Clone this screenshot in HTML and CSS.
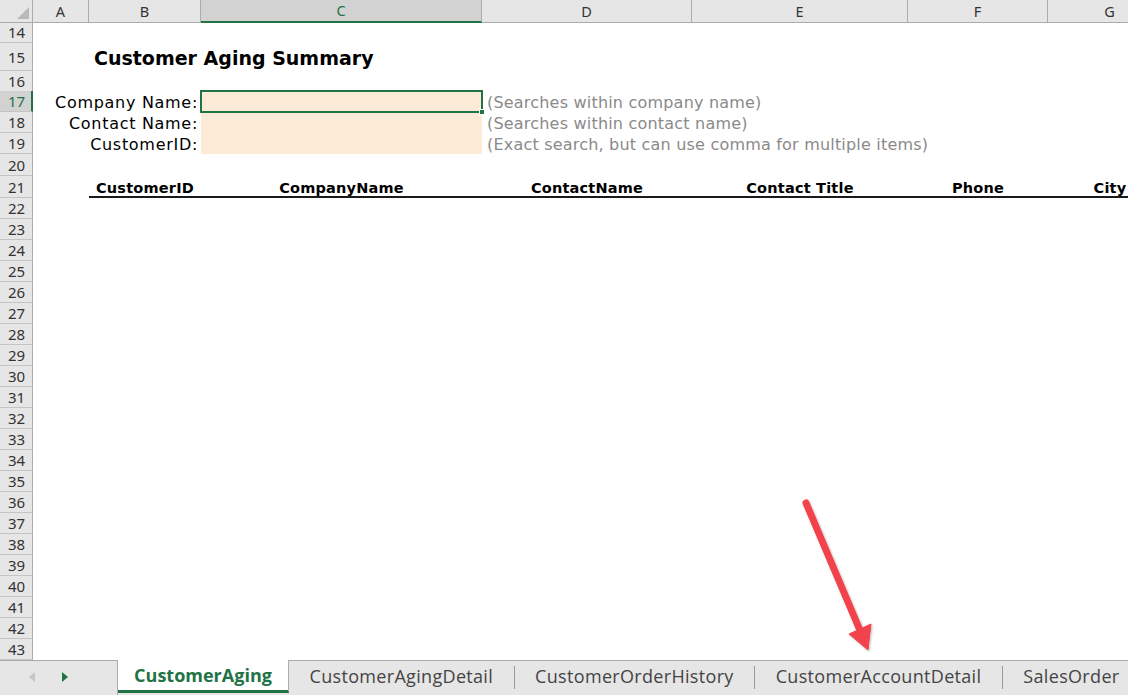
FILE: index.html
```html
<!DOCTYPE html>
<html>
<head>
<meta charset="utf-8">
<link rel="stylesheet" href="styles.css">
</head>
<body>
<div class="app">
  <div class="sheet">
    <div class="row colhead">
      <div class="corner"><span class="tri"></span></div>
      <div class="ch">A</div>
      <div class="ch">B</div>
      <div class="ch sel">C</div>
      <div class="ch">D</div>
      <div class="ch">E</div>
      <div class="ch">F</div>
      <div class="ch">G</div>
    </div>
    <div class="row h21"><div class="rh">14</div></div>
    <div class="row h28"><div class="rh">15</div><div class="title">Customer Aging Summary</div></div>
    <div class="row h20"><div class="rh">16</div></div>
    <div class="row h21 top"><div class="rh sel">17</div><div class="label">Company Name:</div><div class="input active"><span class="handle"></span></div><div class="hint">(Searches within company name)</div></div>
    <div class="row h21"><div class="rh">18</div><div class="label">Contact Name:</div><div class="input"></div><div class="hint">(Searches within contact name)</div></div>
    <div class="row h21"><div class="rh">19</div><div class="label">CustomerID:</div><div class="input"></div><div class="hint">(Exact search, but can use comma for multiple items)</div></div>
    <div class="row h22"><div class="rh">20</div></div>
    <div class="row h22 thead"><div class="rh">21</div><div class="th cb">CustomerID</div><div class="th">CompanyName</div><div class="th">ContactName</div><div class="th">Contact Title</div><div class="th">Phone</div><div class="th">City</div></div>
    <div class="row h21"><div class="rh">22</div></div>
    <div class="row h21"><div class="rh">23</div></div>
    <div class="row h21"><div class="rh">24</div></div>
    <div class="row h21"><div class="rh">25</div></div>
    <div class="row h21"><div class="rh">26</div></div>
    <div class="row h21"><div class="rh">27</div></div>
    <div class="row h21"><div class="rh">28</div></div>
    <div class="row h21"><div class="rh">29</div></div>
    <div class="row h21"><div class="rh">30</div></div>
    <div class="row h21"><div class="rh">31</div></div>
    <div class="row h21"><div class="rh">32</div></div>
    <div class="row h21"><div class="rh">33</div></div>
    <div class="row h21"><div class="rh">34</div></div>
    <div class="row h21"><div class="rh">35</div></div>
    <div class="row h21"><div class="rh">36</div></div>
    <div class="row h21"><div class="rh">37</div></div>
    <div class="row h21"><div class="rh">38</div></div>
    <div class="row h21"><div class="rh">39</div></div>
    <div class="row h21"><div class="rh">40</div></div>
    <div class="row h21"><div class="rh">41</div></div>
    <div class="row h21"><div class="rh">42</div></div>
    <div class="row h21"><div class="rh">43</div></div>
  </div>
  <div class="tabs">
    <div class="nav">
      <span class="tri-left"></span>
      <span class="tri-right"></span>
    </div>
    <div class="tab active">CustomerAging</div>
    <div class="tab">CustomerAgingDetail</div>
    <span class="sep"></span>
    <div class="tab">CustomerOrderHistory</div>
    <span class="sep"></span>
    <div class="tab">CustomerAccountDetail</div>
    <span class="sep"></span>
    <div class="tab">SalesOrder</div>
  </div>
  <svg class="arrow" width="1128" height="695" viewBox="0 0 1128 695">
    <defs>
      <filter id="sh" x="-20%" y="-20%" width="140%" height="140%">
        <feDropShadow dx="1" dy="1" stdDeviation="1.2" flood-color="#000" flood-opacity="0.25"/>
      </filter>
    </defs>
    <g filter="url(#sh)" fill="#f2434b" stroke="#f2434b">
      <line x1="806" y1="503" x2="859" y2="628" stroke-width="7" stroke-linecap="round"/>
      <polygon points="849,634 871,624 868,650" stroke-width="1" stroke-linejoin="round"/>
    </g>
  </svg>
</div>
</body>
</html>
```

FILE: styles.css
```css
* { box-sizing: border-box; }
html, body { margin: 0; padding: 0; background: #fff; }
.app {
  position: relative;
  width: 1128px;
  height: 695px;
  overflow: hidden;
  display: flex;
  flex-direction: column;
  font-family: "DejaVu Sans", sans-serif;
}
.sheet {
  width: 1128px;
  overflow: hidden;
  flex: none;
}
.row {
  display: grid;
  grid-template-columns: 33px 56px 112px 281px 210px 216px 140px 124px;
  width: 1172px;
}
.row.top {
  position: relative;
  z-index: 2;
}
.h20 { height: 20px; }
.h21 { height: 21px; }
.h22 { height: 22px; }
.h28 { height: 28px; }

.colhead { height: 22px; }
.corner {
  position: relative;
  background: #e6e6e6;
  border-right: 1px solid #ababab;
  border-bottom: 1px solid #ababab;
}
.corner .tri {
  position: absolute;
  right: 3px;
  bottom: 3px;
  width: 0;
  height: 0;
  border-left: 12px solid transparent;
  border-bottom: 12px solid #b9b9b9;
}
.ch {
  background: #e6e6e6;
  border-right: 1px solid #ababab;
  border-bottom: 1px solid #ababab;
  font-family: "Noto Sans", sans-serif;
  font-size: 14.5px;
  color: #333;
  display: flex;
  align-items: center;
  justify-content: center;
  padding-bottom: 1px;
}
.ch.sel {
  background: #d2d2d2;
  color: #217346;
  border-bottom: 2px solid #217346;
}
.rh {
  grid-column: 1;
  background: #e6e6e6;
  border-right: 1px solid #ababab;
  border-bottom: 1px solid #c4c4c4;
  font-family: "Noto Sans", sans-serif;
  font-size: 15px;
  color: #333;
  display: flex;
  align-items: center;
  justify-content: center;
  padding-left: 1px;
}
.rh.sel {
  background: #d2d2d2;
  color: #217346;
  border-right: 2px solid #217346;
  padding-left: 2px;
}

.title {
  grid-column: 3 / 7;
  font-weight: bold;
  font-size: 19px;
  color: #000;
  padding-left: 5px;
  padding-top: 2px;
  display: flex;
  align-items: center;
  white-space: nowrap;
}
.label {
  grid-column: 2 / 4;
  font-size: 16px;
  letter-spacing: 0.7px;
  color: #000;
  text-align: right;
  padding-right: 3px;
  padding-top: 2px;
  display: flex;
  align-items: center;
  justify-content: flex-end;
  white-space: nowrap;
}
.input {
  grid-column: 4;
  background: #fdebd7;
  position: relative;
}
.input.active::after {
  content: "";
  position: absolute;
  left: -1px;
  top: -1px;
  right: -1px;
  bottom: -1px;
  border: 2px solid #217346;
}
.handle {
  position: absolute;
  right: -3px;
  bottom: -3px;
  width: 6px;
  height: 6px;
  background: #217346;
  border: 1px solid #fff;
  z-index: 2;
}
.hint {
  grid-column: 5 / 9;
  font-size: 16px;
  letter-spacing: 0.2px;
  color: #8a8a8a;
  padding-left: 5px;
  padding-top: 2px;
  display: flex;
  align-items: center;
  white-space: nowrap;
}

.th {
  border-bottom: 2px solid #1a1a1a;
  font-weight: bold;
  font-size: 14.5px;
  letter-spacing: 0.2px;
  color: #000;
  display: flex;
  align-items: center;
  justify-content: center;
  padding-top: 3px;
  white-space: nowrap;
}
.th.cb { grid-column: 3; }

.tabs {
  flex: 1;
  display: flex;
  align-items: stretch;
  background: #e6e6e6;
  border-top: 1px solid #ababab;
  font-family: "Open Sans", sans-serif;
  font-size: 18px;
  color: #444;
}
.nav {
  width: 118px;
  flex: none;
  display: flex;
  align-items: center;
  padding-left: 29px;
  gap: 27px;
  border-right: 1px solid #ababab;
  padding-bottom: 2px;
}
.tri-left {
  width: 0;
  height: 0;
  border-top: 5px solid transparent;
  border-bottom: 5px solid transparent;
  border-right: 6px solid #c6c6c6;
}
.tri-right {
  width: 0;
  height: 0;
  border-top: 5px solid transparent;
  border-bottom: 5px solid transparent;
  border-left: 6px solid #217346;
}
.tab {
  flex: none;
  display: flex;
  align-items: center;
  padding: 0 20.5px 4px;
  letter-spacing: 0.32px;
  white-space: nowrap;
}
.tab.active {
  width: 171px;
  justify-content: center;
  padding: 0 0 1px;
  margin-top: -1px;
  background: #fff;
  color: #217346;
  font-weight: bold;
  letter-spacing: 0;
  border-right: 1px solid #ababab;
  border-bottom: 3px solid #217346;
  margin-bottom: 2px;
}
.sep {
  flex: none;
  width: 1px;
  height: 23px;
  align-self: center;
  margin-top: -2px;
  background: #9a9a9a;
}
.arrow {
  position: absolute;
  left: 0;
  top: 0;
  pointer-events: none;
}
```
